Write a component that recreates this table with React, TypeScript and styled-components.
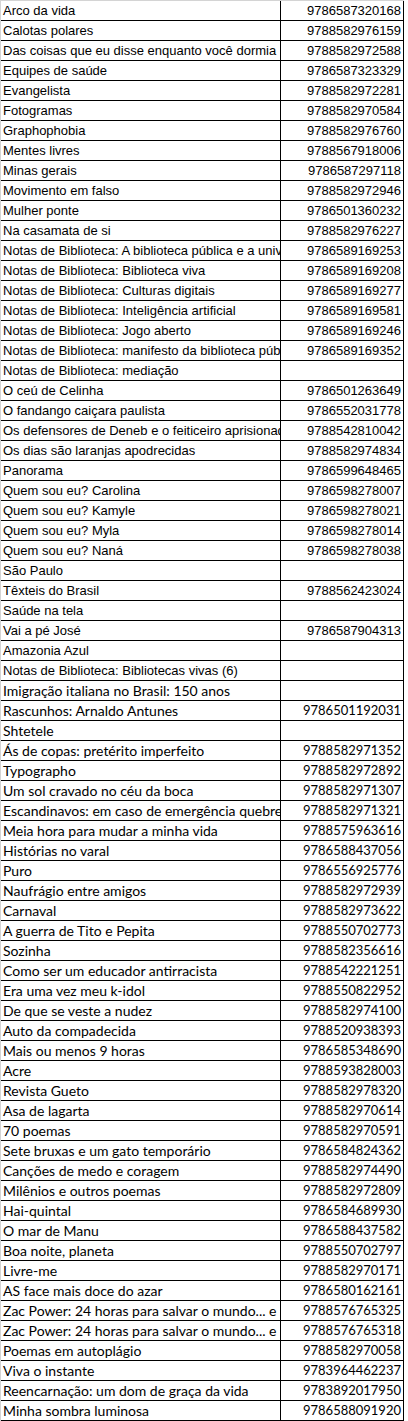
import styled, { createGlobalStyle } from "styled-components";

const GlobalStyle = createGlobalStyle`
  body {
    margin: 0;
    background: #fff;
  }
`;

type Face = "arial" | "calibri";

type Book = [string, string, Face];

const books: Book[] = [
  ["Arco da vida", "9786587320168", "arial"],
  ["Calotas polares", "9788582976159", "arial"],
  ["Das coisas que eu disse enquanto você dormia", "9788582972588", "arial"],
  ["Equipes de saúde", "9786587323329", "arial"],
  ["Evangelista", "9788582972281", "arial"],
  ["Fotogramas", "9788582970584", "arial"],
  ["Graphophobia", "9788582976760", "arial"],
  ["Mentes livres", "9788567918006", "arial"],
  ["Minas gerais", "9786587297118", "arial"],
  ["Movimento em falso", "9788582972946", "arial"],
  ["Mulher ponte", "9786501360232", "arial"],
  ["Na casamata de si", "9788582976227", "arial"],
  ["Notas de Biblioteca: A biblioteca pública e a universidade", "9786589169253", "arial"],
  ["Notas de Biblioteca: Biblioteca viva", "9786589169208", "arial"],
  ["Notas de Biblioteca: Culturas digitais", "9786589169277", "arial"],
  ["Notas de Biblioteca: Inteligência artificial", "9786589169581", "arial"],
  ["Notas de Biblioteca: Jogo aberto", "9786589169246", "arial"],
  ["Notas de Biblioteca: manifesto da biblioteca pública", "9786589169352", "arial"],
  ["Notas de Biblioteca: mediação", "", "arial"],
  ["O ceú de Celinha", "9786501263649", "arial"],
  ["O fandango caiçara paulista", "9786552031778", "arial"],
  ["Os defensores de Deneb e o feiticeiro aprisionado", "9788542810042", "arial"],
  ["Os dias são laranjas apodrecidas", "9788582974834", "arial"],
  ["Panorama", "9786599648465", "arial"],
  ["Quem sou eu? Carolina", "9786598278007", "arial"],
  ["Quem sou eu? Kamyle", "9786598278021", "arial"],
  ["Quem sou eu? Myla", "9786598278014", "arial"],
  ["Quem sou eu? Naná", "9786598278038", "arial"],
  ["São Paulo", "", "arial"],
  ["Têxteis do Brasil", "9788562423024", "arial"],
  ["Saúde na tela", "", "arial"],
  ["Vai a pé José", "9786587904313", "arial"],
  ["Amazonia Azul", "", "arial"],
  ["Notas de Biblioteca: Bibliotecas vivas (6)", "", "arial"],
  ["Imigração italiana no Brasil: 150 anos", "", "calibri"],
  ["Rascunhos: Arnaldo Antunes", "9786501192031", "calibri"],
  ["Shtetele", "", "calibri"],
  ["Ás de copas: pretérito imperfeito", "9788582971352", "calibri"],
  ["Typographo", "9788582972892", "calibri"],
  ["Um sol cravado no céu da boca", "9788582971307", "calibri"],
  ["Escandinavos: em caso de emergência quebre o vidro", "9788582971321", "calibri"],
  ["Meia hora para mudar a minha vida", "9788575963616", "calibri"],
  ["Histórias no varal", "9786588437056", "calibri"],
  ["Puro", "9786556925776", "calibri"],
  ["Naufrágio entre amigos", "9788582972939", "calibri"],
  ["Carnaval", "9788582973622", "calibri"],
  ["A guerra de Tito e Pepita", "9788550702773", "calibri"],
  ["Sozinha", "9788582356616", "calibri"],
  ["Como ser um educador antirracista", "9788542221251", "calibri"],
  ["Era uma vez meu k-idol", "9788550822952", "calibri"],
  ["De que se veste a nudez", "9788582974100", "calibri"],
  ["Auto da compadecida", "9788520938393", "calibri"],
  ["Mais ou menos 9 horas", "9786585348690", "calibri"],
  ["Acre", "9788593828003", "calibri"],
  ["Revista Gueto", "9788582978320", "calibri"],
  ["Asa de lagarta", "9788582970614", "calibri"],
  ["70 poemas", "9788582970591", "calibri"],
  ["Sete bruxas e um gato temporário", "9786584824362", "calibri"],
  ["Canções de medo e coragem", "9788582974490", "calibri"],
  ["Milênios e outros poemas", "9788582972809", "calibri"],
  ["Hai-quintal", "9786584689930", "calibri"],
  ["O mar de Manu", "9786588437582", "calibri"],
  ["Boa noite, planeta", "9788550702797", "calibri"],
  ["Livre-me", "9788582970171", "calibri"],
  ["AS face mais doce do azar", "9786580162161", "calibri"],
  ["Zac Power: 24 horas para salvar o mundo... e inclusive", "9788576765325", "calibri"],
  ["Zac Power: 24 horas para salvar o mundo... e lá vamos", "9788576765318", "calibri"],
  ["Poemas em autoplágio", "9788582970058", "calibri"],
  ["Viva o instante", "9783964462237", "calibri"],
  ["Reencarnação: um dom de graça da vida", "9783892017950", "calibri"],
  ["Minha sombra luminosa", "9786588091920", "calibri"],
];

const Sheet = styled.div`
  width: 404px;
  border-top: 1px solid #d4d4d4;
  border-left: 1px solid #d4d4d4;
  box-sizing: border-box;
`;

const Row = styled.div`
  display: grid;
  grid-template-columns: 280px 123px;
  height: 20px;
  border-bottom: 1px solid #000;
  box-sizing: border-box;
`;

const Cell = styled.div<{ $face: Face }>`
  font-family: ${(p) =>
    p.$face === "arial"
      ? `"Liberation Sans", Arial, sans-serif`
      : `Lato, "Open Sans", sans-serif`};
  font-size: ${(p) => (p.$face === "arial" ? "13px" : "14px")};
  line-height: 19px;
  color: #000;
  white-space: nowrap;
  overflow: hidden;
  box-sizing: border-box;
  border-right: 1px solid #000;
  padding-left: 2px;
`;

const IsbnCell = styled(Cell)`
  padding: 0 2px 0 0;
  text-align: right;
  font-size: 13px;
`;

export default function App() {
  return (
    <>
      <GlobalStyle />
      <Sheet>
        {books.map(([title, isbn, face]) => (
          <Row key={title}>
            <Cell $face={face}>{title}</Cell>
            <IsbnCell $face={face}>{isbn}</IsbnCell>
          </Row>
        ))}
      </Sheet>
    </>
  );
}
